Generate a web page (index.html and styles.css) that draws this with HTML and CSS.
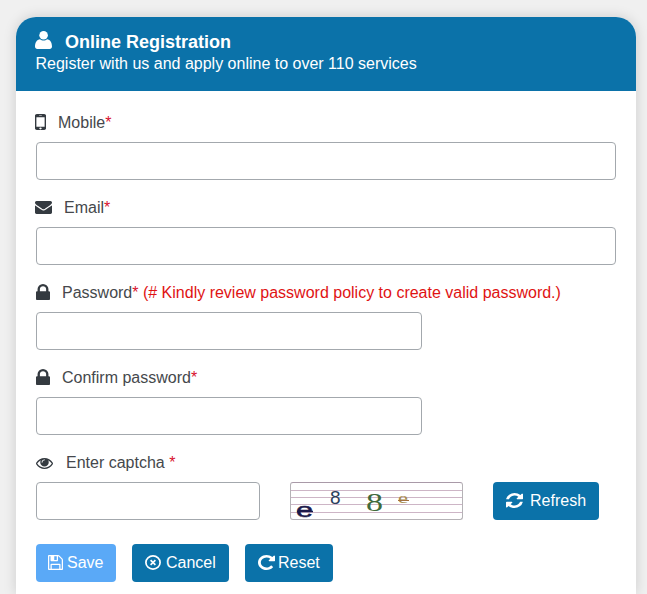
FILE: index.html
```html
<!DOCTYPE html>
<html lang="en">
<head>
<meta charset="utf-8">
<title>Online Registration</title>
<link rel="stylesheet" href="styles.css">
</head>
<body>
<svg class="sprite" xmlns="http://www.w3.org/2000/svg">
  <symbol id="i-mobile" viewBox="512 256 768 1280" preserveAspectRatio="none"><path d="M976 1408q0-33-23.5-56.5t-56.5-23.5-56.5 23.5-23.5 56.5 23.5 56.5 56.5 23.5 56.5-23.5 23.5-56.5zm208-160v-704q0-13-9.5-22.5t-22.5-9.5h-512q-13 0-22.5 9.5t-9.5 22.5v704q0 13 9.5 22.5t22.5 9.5h512q13 0 22.5-9.5t9.5-22.5zm-192-848q0-16-16-16h-160q-16 0-16 16t16 16h160q16 0 16-16zm288-16v1024q0 52-38 90t-90 38h-512q-52 0-90-38t-38-90v-1024q0-52 38-90t90-38h512q52 0 90 38t38 90z"/></symbol>
  <symbol id="i-mail" viewBox="0 256 1792 1408" preserveAspectRatio="none"><path d="M1792 710v794q0 66-47 113t-113 47h-1472q-66 0-113-47t-47-113v-794q44 49 101 87 362 246 497 345 57 42 92.5 65.5t94.5 48 110 24.5h2q51 0 110-24.5t94.5-48 92.5-65.5q170-123 498-345 57-39 100-87zm0-294q0 79-49 151t-122 123q-376 261-468 325-10 7-42.5 30.5t-54 38-52 32.5-57.5 27-50 9h-2q-23 0-50-9t-57.5-27-52-32.5-54-38-42.5-30.5q-91-64-262-182.5t-205-142.5q-62-42-117-115.5t-55-136.5q0-78 41.5-130t118.5-52h1472q65 0 112.5 47t47.5 113z"/></symbol>
  <symbol id="i-lock" viewBox="320 128 1152 1408" preserveAspectRatio="none"><path d="M640 768h512v-192q0-106-75-181t-181-75-181 75-75 181v192zm832 96v576q0 40-28 68t-68 28h-960q-40 0-68-28t-28-68v-576q0-40 28-68t68-28h32v-192q0-184 132-316t316-132 316 132 132 316v192h32q40 0 68 28t28 68z"/></symbol>
  <symbol id="i-eye" viewBox="0 384 1792 1152" preserveAspectRatio="none"><path d="M1664 960q-152-236-381-353 61 104 61 225 0 185-131.5 316.5t-316.5 131.5-316.5-131.5-131.5-316.5q0-121 61-225-229 117-381 353 133 205 333.5 326.5t434.5 121.5 434.5-121.5 333.5-326.5zm-720-384q0-20-14-34t-34-14q-125 0-214.5 89.5t-89.5 214.5q0 20 14 34t34 14 34-14 14-34q0-86 61-147t147-61q20 0 34-14t14-34zm848 384q0 34-20 69-140 230-376.5 368.5t-499.5 138.5-499.5-139-376.5-368q-20-35-20-69t20-69q140-229 376.5-368t499.5-139 499.5 139 376.5 368q20 35 20 69z"/></symbol>
  <symbol id="i-refresh" viewBox="128 128 1536 1536" preserveAspectRatio="none"><path d="M1639 1056q0 5-1 7-64 268-268 434.5t-478 166.5q-146 0-282.5-55t-243.5-157l-129 129q-19 19-45 19t-45-19-19-45v-448q0-26 19-45t45-19h448q26 0 45 19t19 45-19 45l-137 137q71 66 161 102t187 36q134 0 250-65t186-179q11-17 53-117 8-23 30-23h192q13 0 22.5 9.5t9.5 22.5zm25-800v448q0 26-19 45t-45 19h-448q-26 0-45-19t-19-45 19-45l138-138q-148-137-349-137-134 0-250 65t-186 179q-11 17-53 117-8 23-30 23h-199q-13 0-22.5-9.5t-9.5-22.5v-7q65-268 270-434.5t480-166.5q146 0 284 55.5t245 156.5l130-129q19-19 45-19t45 19 19 45z"/></symbol>
  <symbol id="i-reset" viewBox="128 128 1536 1536" preserveAspectRatio="none"><path d="M1664 256v448q0 26-19 45t-45 19h-448q-42 0-59-40-17-39 14-69l138-138q-148-137-349-137-104 0-198.5 40.5t-163.5 109.5-109.5 163.5-40.5 198.5 40.5 198.5 109.5 163.5 163.5 109.5 198.5 40.5q119 0 225-52t179-147q7-10 23-12 15 0 25 9l137 138q9 8 9.5 20.5t-7.5 22.5q-109 132-264 204.5t-327 72.5q-156 0-298-61t-245-164-164-245-61-298 61-298 164-245 245-164 298-61q147 0 284.5 55.5t244.5 156.5l130-129q29-31 70-14 39 17 39 59z"/></symbol>
  <symbol id="i-save" viewBox="128 128 1536 1536" preserveAspectRatio="none"><path d="M512 1536h768v-384h-768v384zm896 0h128v-896q0-14-10-38.5t-20-34.5l-281-281q-10-10-34-20t-39-10v416q0 40-28 68t-68 28h-576q-40 0-68-28t-28-68v-416h-128v1280h128v-416q0-40 28-68t68-28h832q40 0 68 28t28 68v416zm-384-928v-320q0-13-9.5-22.5t-22.5-9.5h-192q-13 0-22.5 9.5t-9.5 22.5v320q0 13 9.5 22.5t22.5 9.5h192q13 0 22.5-9.5t9.5-22.5zm640 32v928q0 40-28 68t-68 28h-1344q-40 0-68-28t-28-68v-1344q0-40 28-68t68-28h928q40 0 88 20t76 48l280 280q28 28 48 76t20 88z"/></symbol>
</svg>

<main class="card">
  <header class="card-head">
    <h1 class="card-title">
      <svg class="ic ic-user" viewBox="0 0 17 18"><circle cx="8.600" cy="4.300" r="4.300"/><path d="M0 15.600C0 11.500 2 8.400 5 8.200c1 .8 2.200 1.300 3.600 1.300s2.600-.5 3.500-1.300c3 .2 4.900 3.300 4.900 7.400 0 1.500-1 2.400-2.300 2.400H2.300C1 18 0 17.100 0 15.600z"/></svg>
      <span>Online Registration</span>
    </h1>
    <p class="card-sub">Register with us and apply online to over 110 services</p>
  </header>
  <form class="card-body">
    <div class="field">
      <label class="lbl lbl-mobile"><svg class="ic ic-mobile"><use href="#i-mobile"/></svg><span>Mobile<b class="req">*</b></span></label>
      <input class="ctl" type="text">
    </div>
    <div class="field">
      <label class="lbl lbl-mail"><svg class="ic ic-mail"><use href="#i-mail"/></svg><span>Email<b class="req">*</b></span></label>
      <input class="ctl" type="text">
    </div>
    <div class="field">
      <label class="lbl lbl-lock"><svg class="ic ic-lock"><use href="#i-lock"/></svg><span>Password<b class="req">*</b> <span class="note">(# Kindly review password policy to create valid password.)</span></span></label>
      <input class="ctl ctl-half" type="password">
    </div>
    <div class="field">
      <label class="lbl lbl-lock"><svg class="ic ic-lock"><use href="#i-lock"/></svg><span>Confirm password<b class="req">*</b></span></label>
      <input class="ctl ctl-half" type="password">
    </div>
    <div class="field">
      <label class="lbl lbl-eye"><svg class="ic ic-eye"><use href="#i-eye"/></svg><span>Enter captcha <b class="req">*</b></span></label>
      <div class="captcha-row">
        <input class="ctl ctl-captcha" type="text">
        <svg class="captcha" viewBox="0 0 171 36">
          <path class="captcha-lines" d="M0 7.500H171M0 14.500H171M0 21.500H171M0 29.500H171"/>
          <text class="cg1" x="5" y="33.500" textLength="17" lengthAdjust="spacingAndGlyphs">e</text>
          <text class="cg2" x="39" y="21">8</text>
          <text class="cg3" x="75" y="28" textLength="17" lengthAdjust="spacingAndGlyphs">8</text>
          <text class="cg4" x="107" y="20" textLength="10" lengthAdjust="spacingAndGlyphs">e</text>
          <path class="cs1" d="M6 28.500H22"/>
          <path class="cs2" d="M107 17.500H118"/>
        </svg>
        <button class="btn btn-refresh" type="button"><svg class="ic ic-btn ic-refresh"><use href="#i-refresh"/></svg>Refresh</button>
      </div>
    </div>
    <div class="actions">
      <button class="btn btn-save" type="button"><svg class="ic ic-btn ic-save"><use href="#i-save"/></svg>Save</button>
      <button class="btn btn-cancel" type="button">
        <svg class="ic ic-cancel" viewBox="0 0 16 15"><ellipse cx="8" cy="7.500" rx="7.100" ry="6.600"/><path d="M5.600 5.200l4.800 4.600M10.400 5.200L5.600 9.800"/></svg>
        Cancel
      </button>
      <button class="btn btn-reset" type="button"><svg class="ic ic-btn ic-reset"><use href="#i-reset"/></svg>Reset</button>
    </div>
  </form>
</main>
</body>
</html>
```

FILE: styles.css
```css
* { box-sizing: border-box; }
html, body { height: 594px; overflow: hidden; }
body {
  margin: 0;
  padding: 17px 11px 0 16px;
  background: #f0f0f0;
  font-family: "Liberation Sans", Arial, sans-serif;
  font-size: 16px;
  line-height: 24px;
  color: #45484c;
}
.sprite { display: none; }
.card {
  width: 620px;
  height: 577px;
  background: #fff;
  border-radius: 20px 20px 0 0;
  box-shadow: 0 0 13px rgba(0, 0, 0, .15);
}
.card-head {
  height: 74px;
  padding: 13px 20px 0;
  background: #0b72a9;
  color: #fff;
  border-radius: 20px 20px 0 0;
}
.card-title {
  display: flex;
  align-items: center;
  gap: 13px;
  margin: 0;
  height: 24px;
  font-size: 18px;
  font-weight: 700;
  line-height: 24px;
}
.card-sub { margin: 0 0 0 -.5px; height: 21px; line-height: 20px; }
.card-body { padding: 19px 20px 0; }
.field { margin-bottom: 15px; }
.lbl {
  display: flex;
  align-items: center;
  height: 24px;
  margin-bottom: 8px;
}
.lbl > span { padding-top: 2px; }
.lbl-mobile { gap: 12px; }
.lbl-mail { gap: 12px; }
.lbl-lock { gap: 12px; }
.lbl-eye { gap: 13px; }
.req { font-weight: 400; color: #d8112d; }
.note { color: #e01313; }
.ic { display: block; flex: none; fill: #343a40; }
.ic-user { width: 17px; height: 18px; margin: -4px 0 0 -1px; fill: #fff; }
.ic-mobile { width: 11px; height: 16px; margin-left: -1px; }
.ic-mail { width: 17px; height: 13px; margin: 1px 0 0 -1px; }
.ic-lock { width: 14px; height: 16px; }
.ic-eye { width: 17px; height: 11px; margin-top: 2px; }
.ctl {
  display: block;
  width: 100%;
  height: 38px;
  border: 1px solid #a3a8ad;
  border-radius: 4px;
  background: #fff;
}
.ctl-half { width: 386px; }
.ctl-captcha { width: 224px; }
.captcha-row { display: flex; gap: 30px; }
.captcha {
  display: block;
  width: 173px;
  height: 38px;
  overflow: visible;
  border: 1px solid #b5b2b6;
  border-top-color: #a99aa8;
  border-radius: 3px;
  background: #fff;
}
.captcha-lines { stroke: #cdb5c6; stroke-width: 1; fill: none; }
.cg1 { font: 400 21px "Liberation Sans", Arial, sans-serif; fill: #1c1a4a; stroke: #1c1a4a; stroke-width: .5; }
.cg2 { font: 19px "Liberation Sans", Arial, sans-serif; fill: #2c3e5c; }
.cg3 { font: 26px "Liberation Serif", serif; fill: #3f6a3c; }
.cg4 { font: 14px "Liberation Serif", serif; fill: #a68b4e; }
.cs1 { stroke: #1c1a4a; stroke-width: 1.500; }
.cs2 { stroke: #a3703f; stroke-width: 1; }
.btn {
  display: inline-flex;
  align-items: center;
  height: 38px;
  padding: 0 13px;
  border: 0;
  border-radius: 4px;
  background: #0b72a9;
  color: #fff;
  font: 16px/24px "Liberation Sans", Arial, sans-serif;
}
.ic-btn { fill: #fff; height: 15px; margin-top: -1px; }
.ic-refresh { width: 17px; }
.ic-save { width: 15px; }
.ic-reset { width: 17px; }
.ic-cancel {
  width: 16px;
  height: 15px;
  margin-top: -1px;
  fill: none;
  stroke: #fff;
  stroke-width: 1.700;
}
.btn-refresh { gap: 7px; width: 106px; }
.btn-save { width: 80px; padding-left: 12px; gap: 4px; background: #5aa9f7; }
.btn-cancel { width: 97px; gap: 5px; }
.btn-reset { width: 88px; gap: 3px; }
.actions { display: flex; gap: 16px; margin-top: 24px; }
```
